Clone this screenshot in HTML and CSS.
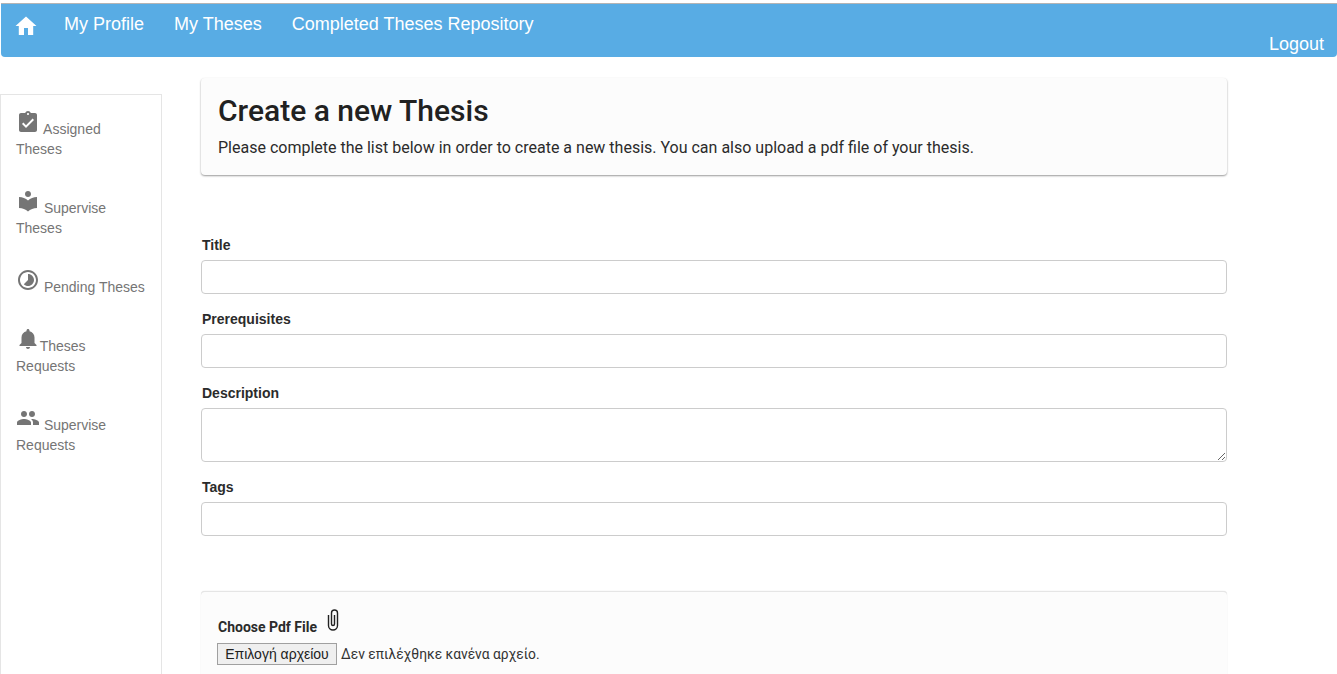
FILE: index.html
```html
<!DOCTYPE html>
<html lang="en">
<head>
  <meta charset="UTF-8">
  <title>Create a new Thesis</title>
  <link rel="stylesheet" href="styles.css">
</head>
<body>
  <nav class="navbar">
    <a class="nav-home" href="#">
      <svg viewBox="0 0 24 24" width="24" height="24"><path d="M10 21v-7h4v7h5.200v-9H22.500L12 2.500 1.500 12h3.300v9z" fill="#fff"/></svg>
    </a>
    <a href="#">My Profile</a>
    <a href="#">My Theses</a>
    <a href="#">Completed Theses Repository</a>
    <a class="nav-logout" href="#">Logout</a>
  </nav>
  <div class="page">
    <div class="sidebar">
      <a class="side-link" href="#">
        <svg viewBox="0 0 24 24" width="24" height="24"><path d="M19 3h-4.200C14.400 1.800 13.300 1 12 1s-2.400.8-2.800 2H5C3.900 3 3 3.900 3 5v15c0 1.100.9 2 2 2h14c1.100 0 2-.9 2-2V5c0-1.100-.9-2-2-2zm-7 0c.55 0 1 .45 1 1s-.45 1-1 1-1-.45-1-1 .45-1 1-1zm-2 15l-4-4 1.400-1.400 2.600 2.600 6.600-6.600L18 10z" fill="#757575"/></svg>
        Assigned Theses
      </a>
      <a class="side-link" href="#">
        <svg viewBox="0 0 24 24" width="24" height="24"><path d="M12 11.500C9.600 9.300 6.500 8 3 8v11c3.500 0 6.600 1.300 9 3.500 2.400-2.200 5.500-3.500 9-3.500V8c-3.500 0-6.600 1.300-9 3.500zM12 8c1.700 0 3-1.300 3-3s-1.300-3-3-3-3 1.300-3 3 1.300 3 3 3z" fill="#757575"/></svg>
        Supervise Theses
      </a>
      <a class="side-link" href="#">
        <svg viewBox="0 0 24 24" width="24" height="24"><path d="M12 2C6.500 2 2 6.500 2 12s4.500 10 10 10 10-4.500 10-10S17.500 2 12 2zm0 18c-4.400 0-8-3.600-8-8s3.600-8 8-8 8 3.600 8 8-3.600 8-8 8zm0-14v6l-4.200 4.200c1.100 1.100 2.600 1.800 4.200 1.800 3.300 0 6-2.700 6-6s-2.700-6-6-6z" fill="#757575"/></svg>
        Pending Theses
      </a>
      <a class="side-link" href="#">
        <svg class="icon-tight" viewBox="0 0 24 24" width="24" height="24"><path d="M12 22c1.100 0 2-.9 2-2h-4c0 1.100.9 2 2 2zm6.500-6v-5.500c0-3.100-2.100-5.600-5-6.300V3.500c0-.8-.7-1.500-1.500-1.500s-1.500.7-1.500 1.500v.7c-2.900.7-5 3.200-5 6.300V16l-2 2v1h17v-1z" fill="#757575"/></svg>
        Theses Requests
      </a>
      <a class="side-link" href="#">
        <svg viewBox="0 0 24 24" width="24" height="24"><path d="M16 11c1.700 0 3-1.300 3-3s-1.300-3-3-3-3 1.300-3 3 1.300 3 3 3zm-8 0c1.700 0 3-1.300 3-3S9.700 5 8 5 5 6.300 5 8s1.300 3 3 3zm0 2c-2.300 0-7 1.200-7 3.500V19h14v-2.500C15 14.200 10.300 13 8 13zm8 0c-.3 0-.6 0-1 .1 1.200.8 2 2 2 3.400V19h6v-2.500c0-2.300-4.700-3.500-7-3.500z" fill="#757575"/></svg>
        Supervise Requests
      </a>
    </div>
    <main class="main">
      <div class="card card-head">
        <h1>Create a new Thesis</h1>
        <p>Please complete the list below in order to create a new thesis. You can also upload a pdf file of your thesis.</p>
      </div>
      <form class="thesis-form">
        <label for="title">Title</label>
        <input class="field" id="title" type="text">
        <label for="prereq">Prerequisites</label>
        <input class="field" id="prereq" type="text">
        <label for="desc">Description</label>
        <textarea class="field field-area" id="desc"></textarea>
        <label for="tags">Tags</label>
        <input class="field" id="tags" type="text">
        <div class="card card-file">
          <div class="file-label">
            <b>Choose Pdf File</b>
            <svg viewBox="0 0 24 24" width="24" height="24"><path d="M7.500 7v10.500a4.500 4.500 0 0 0 9 0V5a3 3 0 0 0-6 0v11a1.500 1.500 0 0 0 3 0V7" fill="none" stroke="#222" stroke-width="1.400"/></svg>
          </div>
          <div class="file-row">
            <button class="file-btn" type="button">Επιλογή αρχείου</button>
            <span>Δεν επιλέχθηκε κανένα αρχείο.</span>
          </div>
        </div>
      </form>
    </main>
  </div>
</body>
</html>
```

FILE: styles.css
```css
html, body { height: 100%; overflow: hidden; }
body { margin: 0; background-color: #fff; color: #212121; font-family: "Liberation Sans", Arial, sans-serif; font-size: 14px; padding-top: 3px; box-sizing: border-box; }

.navbar { height: 54px; box-sizing: border-box; background-color: #58ace4; border-top: 1px solid #b4b4b4; border-radius: 0 0 4px 4px; margin-left: 1px; display: flex; align-items: flex-start; padding: 0 13px 0 13px; }
.navbar a { color: #fff; text-decoration: none; font-size: 18px; line-height: 20px; margin-top: 10px; margin-right: 30px; }
.navbar .nav-home { margin-right: 26px; height: 24px; }
.navbar .nav-logout { margin-left: auto; margin-right: 0; margin-top: 30px; }

.page { display: flex; align-items: flex-start; height: 617px; overflow: hidden; }
.sidebar { width: 162px; height: 620px; box-sizing: border-box; margin-top: 37px; border: 1px solid #e5e5e5; padding: 15px 15px 0 15px; flex-shrink: 0; }
.side-link { display: block; color: #757575; text-decoration: none; line-height: 20px; margin-bottom: 30px; }
.side-link .icon-tight { margin-right: -4px; }

.main { width: 1026px; margin-left: 39px; margin-top: 21px; }
.card { background-color: #fcfcfc; border-radius: 4px; }
.card-head { height: 97px; box-sizing: border-box; padding: 16px 17px; box-shadow: 0 1px 2px rgba(0, 0, 0, 0.4); }
.card-head h1 { margin: 0; font-family: Roboto, sans-serif; font-size: 30px; font-weight: 500; line-height: 34px; color: #212121; }
.card-head p { margin: 10px 0 0 0; font-family: Roboto, sans-serif; font-size: 16px; line-height: 20px; color: #2b2b2b; }

.thesis-form { display: flex; flex-direction: column; padding-top: 60px; }
.thesis-form label { font-weight: bold; font-size: 14px; line-height: 20px; margin: 0 1px 5px; color: #2b2b2b; }
.field { height: 34px; box-sizing: border-box; border: 1px solid #ccc; border-radius: 4px; background-color: #fff; margin-bottom: 15px; display: block; width: 100%; }
.field-area { height: 54px; }

.card-file { margin-top: 40px; border-top: 1px solid #e5e5e5; padding: 14px 17px; height: 120px; box-sizing: border-box; box-shadow: 0 0 1px rgba(0, 0, 0, 0.2); }
.file-label { display: flex; align-items: flex-end; gap: 4px; height: 29px; font-family: Roboto, sans-serif; }
.file-label b { font-weight: 700; font-size: 14px; line-height: 16px; color: #2b2b2b; }
.file-label svg { margin-bottom: 3px; }
.file-row { display: flex; align-items: center; gap: 4px; margin: 8px 0 0 -1px; font-family: Roboto, sans-serif; font-size: 13.800px; color: #333; }
.file-btn { height: 22px; width: 120px; padding: 0; border: 1px solid #a0a0a0; background-color: #efefef; font-family: "Liberation Sans", sans-serif; font-size: 14px; color: #212121; }
```
